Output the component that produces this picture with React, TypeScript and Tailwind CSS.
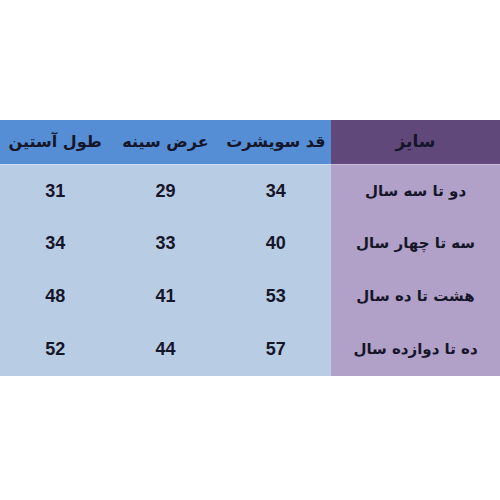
import React from 'react'

const rows = [
  { size: 'دو تا سه سال', height: 34, chest: 29, sleeve: 31 },
  { size: 'سه تا چهار سال', height: 40, chest: 33, sleeve: 34 },
  { size: 'هشت تا ده سال', height: 53, chest: 41, sleeve: 48 },
  { size: 'ده تا دوازده سال', height: 57, chest: 44, sleeve: 52 },
]

export default function App() {
  return (
    <div className="w-[500px] h-[500px] bg-white pt-[120px]">
      <div dir="rtl" className="grid grid-cols-[169px_1fr_1fr_1fr] text-[#16162a] font-bold">
        {/* header */}
        <div className="h-[44px] bg-[#60497a] flex items-center justify-center text-[17px] font-['DejaVu_Sans',sans-serif]">
          سایز
        </div>
        <div className="h-[44px] bg-[#558ed5] flex items-center justify-center text-[16px] font-['DejaVu_Sans',sans-serif]">
          قد سویشرت
        </div>
        <div className="h-[44px] bg-[#558ed5] flex items-center justify-center text-[16px] font-['DejaVu_Sans',sans-serif]">
          عرض سینه
        </div>
        <div className="h-[44px] bg-[#558ed5] flex items-center justify-center text-[16px] font-['DejaVu_Sans',sans-serif]">
          طول آستین
        </div>

        {rows.map((r, i) => (
          <React.Fragment key={i}>
            <div
              className={`h-[53px] bg-[#b1a0c7] flex items-center justify-center text-[15px] font-['DejaVu_Sans',sans-serif] ${i === 0 ? 'border-t border-[#c9bcd9]' : ''}`}
            >
              {r.size}
            </div>
            {[r.height, r.chest, r.sleeve].map((v, j) => (
              <div
                key={j}
                className={`h-[53px] bg-[#b8cce4] flex items-center justify-center text-[18px] font-['Liberation_Sans',Arial,sans-serif] ${i === 0 ? 'border-t border-[#cddbee]' : ''}`}
              >
                {v}
              </div>
            ))}
          </React.Fragment>
        ))}
      </div>
    </div>
  )
}
